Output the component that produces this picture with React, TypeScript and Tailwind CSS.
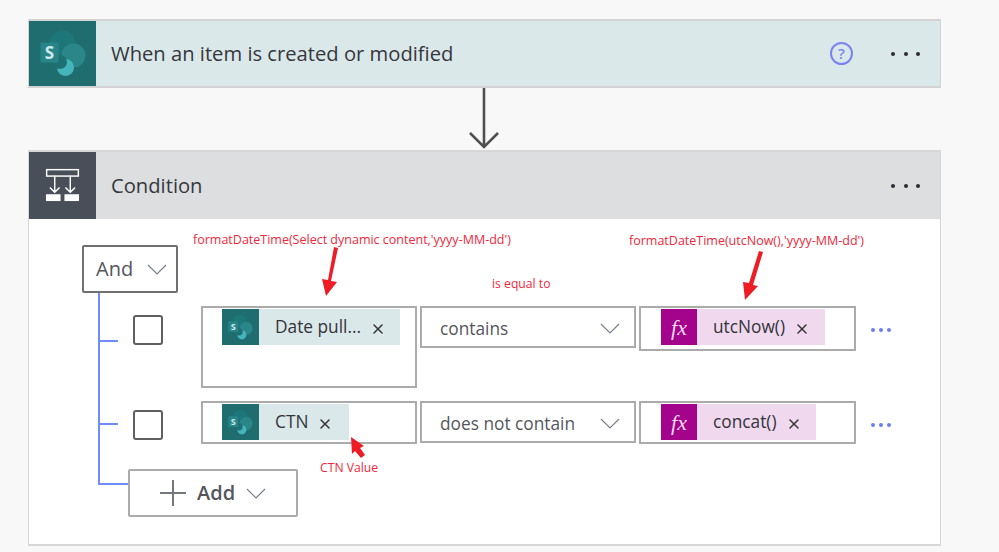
import { X } from 'lucide-react';

const FONT = "font-['Open_Sans','Noto_Sans',sans-serif]";

function SharePointIcon({ size }: { size: number }) {
  return (
    <svg width={size} height={size} viewBox="0 0 50 50">
      <circle cx="24.5" cy="14.5" r="13" fill="#1d7678" />
      <circle cx="35.5" cy="26.5" r="12" fill="#2a8688" />
      <circle cx="27.5" cy="38.5" r="8.5" fill="#45b5bd" />
      <circle cx="22" cy="33" r="7" fill="#1f7073" />
      <rect x="2.5" y="13.5" width="18" height="20" rx="1" fill="#27858a" />
      <text x="11.5" y="30" textAnchor="middle" fontSize="17" fontWeight="700" fill="#cfe8e8" fontFamily="Open Sans, sans-serif">
        S
      </text>
    </svg>
  );
}

function ConditionIcon() {
  return (
    <svg width="35" height="35" viewBox="0 0 36 36" fill="none" stroke="#fff" strokeWidth="1.5">
      <rect x="1.7" y="1.7" width="32.6" height="6.6" />
      <path d="M10 8v17M26 8v17M5 20l5 5 5-5M21 20l5 5 5-5" />
      <rect x="1" y="27" width="15" height="7" fill="#fff" stroke="none" />
      <rect x="20" y="27" width="15" height="7" fill="#fff" stroke="none" />
    </svg>
  );
}

function Chevron({ className }: { className?: string }) {
  return (
    <svg width="20" height="11" viewBox="0 0 20 11" fill="none" stroke="#76808c" strokeWidth="1.2" className={className}>
      <path d="M1 1l9 9 9-9" />
    </svg>
  );
}

function FxIcon() {
  return (
    <span className="flex h-[36px] w-[36px] shrink-0 items-center justify-center bg-[#a4038b] font-['Liberation_Serif',serif] text-[22px] italic text-[#f6dcef]">
      fx
    </span>
  );
}

function Chip({ label, kind, width }: { label: string; kind: 'sp' | 'fx'; width: string }) {
  return (
    <div className={`flex h-[36px] items-center ${width} ${kind === 'sp' ? 'bg-[#dbe8e9]' : 'bg-[#f0d8ee]'}`}>
      {kind === 'sp' ? (
        <span className="flex h-[36px] w-[37px] shrink-0 items-center justify-center bg-[#1f6d6f]">
          <SharePointIcon size={27} />
        </span>
      ) : (
        <FxIcon />
      )}
      <span className="mb-[1px] ml-[16px] text-[17.3px] leading-none whitespace-nowrap text-[#33343a]">{label}</span>
      <X className="mt-[3px] ml-[9px] text-[#333]" size={16} strokeWidth={2.2} />
    </div>
  );
}

function Select({ label }: { label: string }) {
  return (
    <div className="flex h-[42px] w-[216px] shrink-0 items-center justify-between border-2 border-[#ababab] pt-[3px] pr-[14px] pl-[18px] text-[17.3px] text-[#55565c]">
      <span className="whitespace-nowrap">{label}</span>
      <Chevron />
    </div>
  );
}

function Dots({ color, gap }: { color: string; gap: string }) {
  return (
    <div className={`flex ${gap}`}>
      <span className={`h-[4px] w-[4px] rounded-full ${color}`} />
      <span className={`h-[4px] w-[4px] rounded-full ${color}`} />
      <span className={`h-[4px] w-[4px] rounded-full ${color}`} />
    </div>
  );
}

function Row({ chip, operator, value, tall }: { chip: React.ReactNode; operator: string; value: React.ReactNode; tall?: boolean }) {
  return (
    <div className="flex items-start">
      <div className={`h-[2px] w-[20px] shrink-0 bg-[#6f8cff] ${tall ? 'mt-[34px]' : 'mt-[22px]'}`} />
      <div className="mt-[9px] ml-[15px] h-[30px] w-[30px] shrink-0 rounded-[3px] border-2 border-[#5f5f5f]" />
      <div className={`ml-[38px] w-[216px] shrink-0 border-2 border-[#ababab] pt-[1px] pl-[19px] ${tall ? 'h-[82px]' : 'h-[43px]'}`}>{chip}</div>
      <div className="ml-[3px]">
        <Select label={operator} />
      </div>
      <div className={`ml-[3px] w-[217px] shrink-0 border-2 border-[#ababab] pt-[1px] pl-[20px] ${tall ? 'h-[45px]' : 'h-[43px]'}`}>{value}</div>
      <div className="mt-[22px] ml-[15px]">
        <Dots color="bg-[#6d7ff0]" gap="gap-[4px]" />
      </div>
    </div>
  );
}

export default function App() {
  return (
    <div className={`relative h-[552px] w-full overflow-hidden bg-[#f8f8f8] pt-[19px] pl-[28px] ${FONT}`}>
      {/* Trigger card */}
      <div className="flex h-[69px] w-[913px] border-x border-y-2 border-[#d4d4d4] bg-[#dbe8e9]">
        <div className="flex w-[67px] shrink-0 items-center justify-center bg-[#1f6d6f]">
          <SharePointIcon size={50} />
        </div>
        <div className="ml-[15px] flex-1 self-center text-[20.2px] text-[#36373d]">When an item is created or modified</div>
        <div className="mr-[20px] flex items-center gap-[38px]">
          <div className="flex h-[23px] w-[23px] items-center justify-center rounded-full border-2 border-[#7b83f2] text-[15px] font-semibold text-[#7b83f2]">?</div>
          <Dots color="bg-[#2a2a30]" gap="gap-[8.5px]" />
        </div>
      </div>

      {/* Connector arrow */}
      <div className="flex h-[62px] w-[913px] justify-center">
        <svg width="30" height="62" viewBox="0 0 30 62" fill="none" stroke="#505050" strokeWidth="2.6" className="mr-[1px]">
          <path d="M15 0v59M1 45l14 14 14-14" />
        </svg>
      </div>

      {/* Condition card */}
      <div className="h-[396px] w-[913px] border-x border-y-2 border-[#d6d6d6] bg-white">
        <div className="flex h-[67px] items-center bg-[#dcdee0]">
          <div className="flex h-full w-[67px] shrink-0 items-center justify-center bg-[#484f58]">
            <ConditionIcon />
          </div>
          <div className="ml-[15px] flex-1 text-[20.2px] text-[#36373d]">Condition</div>
          <div className="mr-[20px]">
            <Dots color="bg-[#2a2a30]" gap="gap-[8.5px]" />
          </div>
        </div>

        <div className="pt-[26px] pl-[53px]">
          <div className="flex h-[48px] w-[96px] items-center justify-between rounded-[2px] border-2 border-[#707070] bg-white pr-[9px] pl-[12px] text-[20px] text-[#55565c]">
            And
            <Chevron />
          </div>

          <div className="relative ml-[16px] pt-[13px]">
            <div className="absolute top-0 left-0 h-[192px] w-[2px] bg-[#6f8cff]" />
            <Row tall chip={<Chip kind="sp" label="Date pull..." width="w-[178px]" />} operator="contains" value={<Chip kind="fx" label="utcNow()" width="w-[164px]" />} />
            <div className="mt-[13px]">
              <Row chip={<Chip kind="sp" label="CTN" width="w-[127px]" />} operator="does not contain" value={<Chip kind="fx" label="concat()" width="w-[155px]" />} />
            </div>
            <div className="mt-[25px] flex items-start">
              <div className="mt-[14px] h-[2px] w-[30px] bg-[#6f8cff]" />
              <div className="flex h-[48px] w-[170px] items-center rounded-[2px] border-2 border-[#ababab] bg-white pl-[30px] text-[20px] font-semibold text-[#55565c]">
                <svg width="26" height="26" viewBox="0 0 26 26" stroke="#74777d" strokeWidth="2" className="shrink-0">
                  <path d="M0 13h26M13 0v26" />
                </svg>
                <span className="ml-[11px]">Add</span>
                <Chevron className="ml-[11px]" />
              </div>
            </div>
          </div>
        </div>
      </div>

      {/* Red annotations drawn over the screenshot */}
      <span className="absolute top-[231px] left-[193px] text-[12.5px] whitespace-nowrap text-[#f0283c]">formatDateTime(Select dynamic content,'yyyy-MM-dd')</span>
      <span className="absolute top-[232px] left-[629px] text-[12.5px] whitespace-nowrap text-[#f0283c]">formatDateTime(utcNow(),'yyyy-MM-dd')</span>
      <span className="absolute top-[275px] left-[492px] text-[12.2px] whitespace-nowrap text-[#f0283c]">is equal to</span>
      <span className="absolute top-[459px] left-[320px] text-[12.2px] whitespace-nowrap text-[#f0283c]">CTN Value</span>
      <svg className="absolute top-0 left-0" width="999" height="552" fill="#ee1c25">
        <path d="M334 247l4 1-7 33 6 1-11 14-4-17 6 1z" />
        <path d="M759 251l4 1-10 33 5 1-13 14-2-18 6 1z" />
        <path d="M351 437l13 9-4 2 5 7-4 3-6-7-3 3z" />
      </svg>
    </div>
  );
}
